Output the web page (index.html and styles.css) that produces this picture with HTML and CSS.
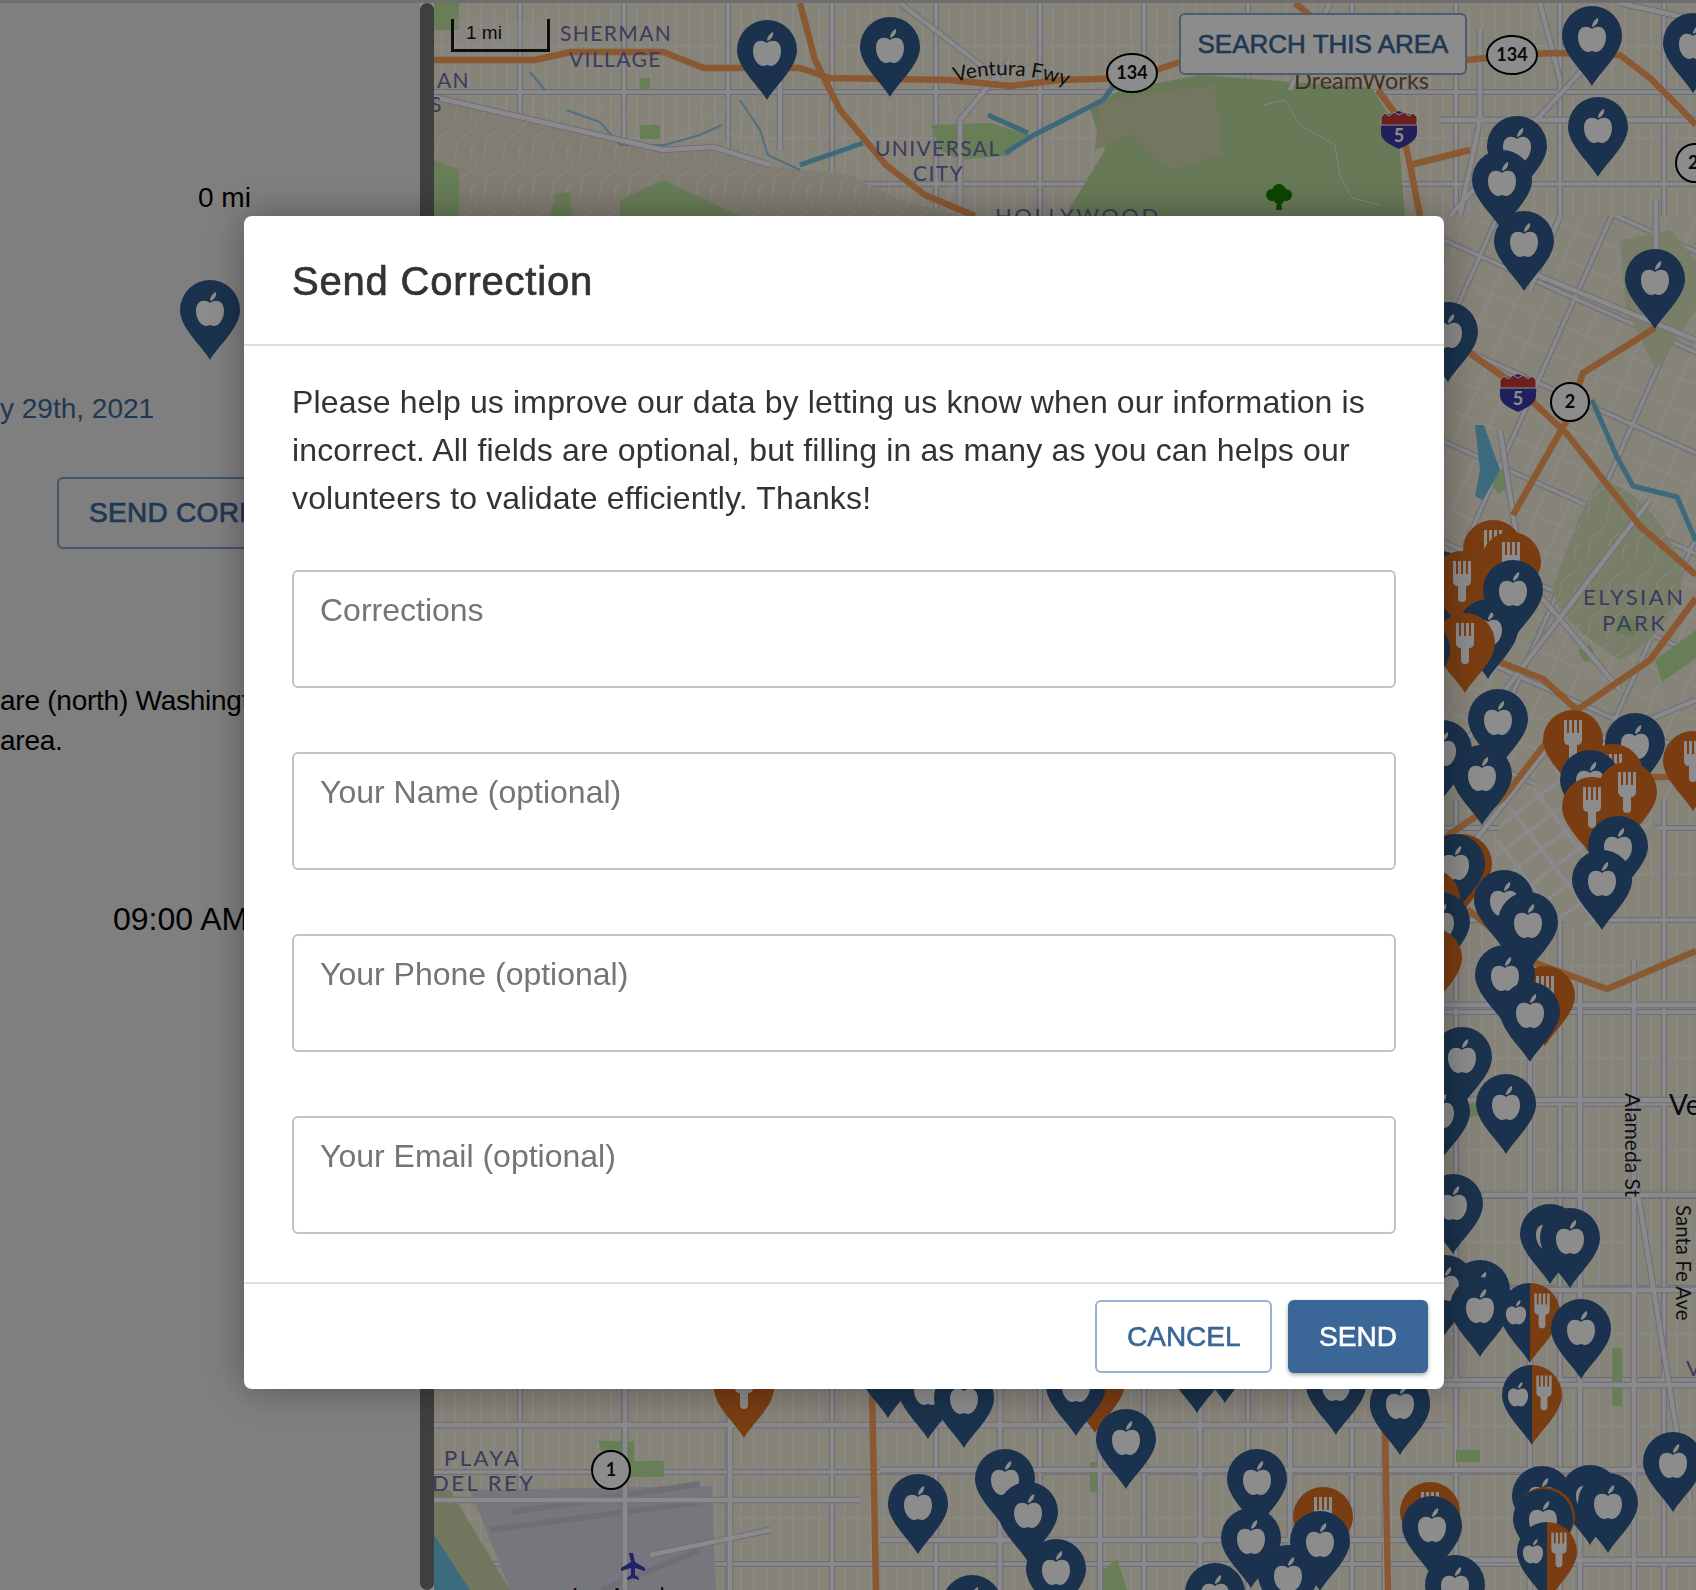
FILE: index.html
```html
<!DOCTYPE html>
<html lang="en">
<head>
<meta charset="utf-8">
<title>Send Correction</title>
<link rel="stylesheet" href="styles.css">
</head>
<body>
<div class="page">
  <aside class="panel">
    <div class="distance">0 mi</div>
    <svg class="panel-pin" width="60" height="80" viewBox="-30 -80 60 80" aria-hidden="true">
      <path class="navy" d="M0 0C-8-14-30-32-30-50A30 30 0 0 1 30-50C30-32 8-14 0 0Z"/>
      <path class="white" d="M0-57C-5-61-14-60-14-49C-14-40-8-34-4-34C-2-34-1-35 0-35C1-35 2-34 4-34C8-34 14-40 14-49C14-60 5-61 0-57ZM0-59C0-63 3-67 6-68C7-64 4-60 0-59Z"/>
    </svg>
    <div class="date">y 29th, 2021</div>
    <div class="panel-button">SEND CORRECTION</div>
    <p class="note">are (north) Washington<br>area.</p>
    <div class="hours">09:00 AM</div>
  </aside>
  <div class="scrollbar"></div>
  <main class="map">
    <svg class="map-art" viewBox="434 3 1262 1587" width="1262" height="1587">
      <defs>
        <pattern id="blocks" width="104" height="92" patternUnits="userSpaceOnUse">
          <path class="minor" d="M13 0V92M26 0V92M39 0V92M52 0V92M65 0V92M78 0V92M91 0V92M0 46H104"/>
          <path class="casing" d="M0 0H104M0 0V92M0 92H104M104 0V92"/>
          <path class="road" d="M0 0H104M0 0V92M0 92H104M104 0V92"/>
        </pattern>
        <pattern id="diag" width="104" height="92" patternUnits="userSpaceOnUse" patternTransform="rotate(24)">
          <path class="minor" d="M26 0V92M52 0V92M78 0V92M0 30H104M0 60H104"/>
          <path class="casing" d="M0 0H104M0 0V92M0 92H104M104 0V92"/>
          <path class="road" d="M0 0H104M0 0V92M0 92H104M104 0V92"/>
        </pattern>
        <pattern id="downtown" width="30" height="22" patternUnits="userSpaceOnUse" patternTransform="rotate(-37)">
          <path class="road" d="M0 0H30M0 0V22M0 22H30M30 0V22"/>
        </pattern>
        <pattern id="contour" width="48" height="40" patternUnits="userSpaceOnUse">
          <path class="contour" d="M2 38C8 28 2 20 12 14S18 6 26 2M22 38C28 28 22 22 32 16S42 8 46 2M38 38C42 32 36 28 44 24"/>
        </pattern>
        <path id="drop" d="M0 0C-8-14-30-32-30-50A30 30 0 0 1 30-50C30-32 8-14 0 0Z"/>
        <path id="apple" d="M0-57C-5-61-14-60-14-49C-14-40-8-34-4-34C-2-34-1-35 0-35C1-35 2-34 4-34C8-34 14-40 14-49C14-60 5-61 0-57ZM0-59C0-63 3-67 6-68C7-64 4-60 0-59Z"/>
        <path id="fork" d="M-9-70h3v13h2v-13h3v13h2v-13h3v13h2v-13h3V-50C9-47 7-45 4-45V-33A4 4 0 0 1-4-33V-45C-7-45-9-47-9-50Z"/>
        <g id="pa"><use href="#drop" class="navy"/><use href="#apple" class="white"/></g>
        <g id="pf"><use href="#drop" class="rust"/><use href="#fork" class="white"/></g>
        <g id="ph">
          <path class="navy" d="M0 0C-8-14-30-32-30-50A30 30 0 0 1 0-80Z"/>
          <path class="rust" d="M0 0C8-14 30-32 30-50A30 30 0 0 0 0-80Z"/>
          <use href="#apple" class="white" transform="translate(-14 -14) scale(.72)"/>
          <use href="#fork" class="white" transform="translate(12 -10) scale(.85)"/>
        </g>
        <g id="i5">
          <path class="shield-blue" d="M-18-12C-12-15-6-15 0-18C6-15 12-15 18-12V4C18 12 8 16 0 20C-8 16-18 12-18 4Z"/>
          <path class="shield-red" d="M-18-12L-14-16L-10-13L-5-17L0-14L5-17L10-13L14-16L18-12V-4H-18Z"/>
          <text class="shield-num" y="13" text-anchor="middle">5</text>
        </g>
        <g id="roads">
          <path d="M434 97L663 150L714 147L770 165M780 75V150M900 3L1000 80M1010 60L960 120V216M1290 90L1330 3M1480 30V120L1460 216M1540 3L1560 80M1620 3L1696 20M1440 120H1696M1450 216L1540 116L1610 40M1530 290L1560 216M1656 200V320M1500 260L1696 340M1500 430L1520 560L1490 620M1444 770L1650 500M1444 880L1570 720M1696 700L1600 740M1510 560L1620 690"/>
          <path d="M1530 1590V930M1580 1590V980M1634 1590V960M1637 1188L1677 1433L1690 1500M1444 1005H1696M1444 1100H1696M1444 1195H1696M1444 1290H1696M1444 1385H1696M1444 1470H1696M1444 1560H1696"/>
          <path d="M434 1425H1444M434 1500H860M880 1540H1444M880 1470H1444M625 1389V1590M730 1389V1590M1000 1389V1590M1100 1389V1590M1200 1389V1590M1290 1389V1590M1385 1389V1590M650 1555L770 1530"/>
        </g>
      </defs>

      <rect class="land" x="434" y="3" width="1262" height="1587"/>
      <rect x="434" y="3" width="1262" height="1587" fill="url(#blocks)"/>

      <!-- terrain, parks -->
      <polygon class="hill" points="434,100 663,152 720,148 765,165 850,175 900,200 960,216 434,216"/>
      <rect x="434" y="100" width="530" height="116" fill="url(#contour)"/>
      <path class="park" d="M434 3h25v27h-25ZM640 78h10v12h-10ZM640 125h20v14h-20ZM434 160l25 10v46h-25ZM550 216l6-22 14-2 2 24ZM620 200l43-20 30 14 47 22h-120ZM931 125L990 123L1030 135L1010 155L960 160L940 150ZM1390 18l8-8 4 14-8 6Z"/>
      <polygon class="land" points="1444,216 1696,216 1696,800 1444,800"/>
      <rect x="1444" y="216" width="252" height="584" fill="url(#diag)"/>
      <polygon class="land" points="1500,820 1570,750 1660,830 1590,930 1490,900"/>
      <polygon points="1500,820 1570,750 1660,830 1590,930 1490,900" fill="url(#downtown)"/>
      <path class="hill-green" d="M1600 480C1640 490 1660 520 1680 560C1690 600 1660 640 1620 660C1590 640 1560 620 1552 590C1570 540 1580 510 1600 480Z"/>
      <rect x="1552" y="480" width="144" height="180" fill="url(#contour)"/>
      <path class="hill-green" d="M1620 240l50-10 26 30v50l-40 60-30-60Z"/>
      <path class="park" d="M1655 660l41-30v28l-34 24ZM1578 650l12-6 6 14-12 4ZM1620 615l20 8-6 14-18-4ZM1490 480l14-12 6 18-12 8ZM1612 1348h10v58h-10ZM1465 1105l24-4 0 14-24 2ZM1576 1330h10v-6h-10ZM1456 1450h24v12h-24Z"/>
      <path class="park" d="M598 1441h36v20h30v16h-52Z"/>
      <path class="park" d="M1090 1462h10v30h-10ZM1097 1575l20-16 10 31h-30Z"/>

      <!-- griffith park -->
      <polygon class="green" points="1065,216 1105,150 1090,110 1120,90 1200,75 1372,88 1398,130 1405,216"/>
      <polygon class="tan" points="1100,100 1215,85 1222,155 1170,170 1130,135 1095,150"/>
      <path class="trail" d="M1263 105L1285 100L1300 125L1335 145L1340 175L1352 198L1380 205"/>

      <!-- airport and coast -->
      <polygon class="airport" points="470,1490 712,1486 716,1590 510,1590"/>
      <path class="runway" d="M512 1512L700 1484M490 1530L700 1502M602 1590L700 1550"/>
      <polygon class="sand" points="434,1490 450,1490 510,1590 464,1590 434,1540"/>
      <polygon class="water" points="434,1535 470,1590 434,1590"/>

      <!-- water -->
      <path class="river" d="M800 165L863 143M1005 153L1034 135L1103 100L1114 85M988 115L1028 133"/>
      <path class="river-thin" d="M740 100L760 130L768 155L800 170M566 110L600 122L620 145L665 145L700 135L722 125M530 72L545 90"/>
      <path class="river" d="M1592 400L1617 457L1633 486L1677 497L1696 541"/>
      <polygon class="water" points="1475,425 1484,425 1500,470 1483,500 1475,496 1480,470"/>

      <!-- larger roads -->
      <use href="#roads" class="casing-wide"/>
      <use href="#roads" class="road-wide"/>

      <!-- freeways -->
      <path class="fwy" d="M434 60L535 60L571 52L663 52L704 68L800 68L830 78L950 80L1010 86L1060 80L1132 78L1180 62L1300 60L1468 60L1512 55L1555 53L1620 55L1650 78L1680 108L1696 125"/>
      <path class="fwy" d="M800 3L815 60L840 110L886 165L925 195L975 216M1295 3L1315 20M1378 90L1400 120L1410 165L1420 216M1410 165L1470 150"/>
      <path class="fwy" d="M1444 335L1515 385L1567 434L1640 526L1696 575M1655 328L1583 373L1567 420L1513 515M1696 598L1650 660L1577 710L1543 679L1500 662M1577 710L1545 744L1503 798L1444 838M1627 777H1696M1467 909L1533 962L1607 989L1696 951"/>
      <path class="fwy" d="M872 1389L876 1590M1385 1430L1388 1590"/>

      <!-- map labels -->
      <text class="place-tight" x="560" y="41">SHERMAN</text>
      <text class="place-tight" x="569" y="67">VILLAGE</text>
      <text class="place-tight" x="437" y="88">AN</text>
      <text class="place-tight" x="430" y="112">S</text>
      <text class="place-tight" x="875" y="156">UNIVERSAL</text>
      <text class="place-tight" x="913" y="181">CITY</text>
      <text class="place" x="995" y="224">HOLLYWOOD</text>
      <text class="place" x="1583" y="605">ELYSIAN</text>
      <text class="place" x="1602" y="631">PARK</text>
      <text class="place" x="444" y="1466">PLAYA</text>
      <text class="place" x="432" y="1491">DEL REY</text>
      <path id="ventura" class="none" d="M955 82Q1013 66 1073 88"/>
      <text class="street-label"><textPath href="#ventura">Ventura Fwy</textPath></text>
      <text class="dream" x="1294" y="89">DreamWorks</text>
      <text class="street-alameda" transform="translate(1625 1093) rotate(90)">Alameda St</text>
      <text class="street-label" transform="translate(1676 1205) rotate(90)">Santa Fe Ave</text>
      <text class="big-label" x="1669" y="1115">Ve</text>
      <text class="place" x="1686" y="1376">V</text>
      <text class="place-dark" x="572" y="1603">Los Angeles</text>

      <!-- shields -->
      <g class="shield"><ellipse cx="1132" cy="73" rx="25" ry="19"/><text x="1132" y="79" text-anchor="middle">134</text></g>
      <g class="shield"><ellipse cx="1512" cy="55" rx="25" ry="19"/><text x="1512" y="61" text-anchor="middle">134</text></g>
      <g class="shield"><ellipse cx="1570" cy="402" rx="19" ry="19"/><text x="1570" y="408" text-anchor="middle">2</text></g>
      <g class="shield"><ellipse cx="1695" cy="163" rx="19" ry="19"/><text x="1688" y="169">2</text></g>
      <g class="shield"><ellipse cx="611" cy="1470" rx="19" ry="19"/><text x="611" y="1476" text-anchor="middle">1</text></g>
      <use href="#i5" x="1399" y="129"/>
      <use href="#i5" x="1518" y="392"/>

      <!-- park tree and plane -->
      <g class="tree"><circle cx="1272" cy="195" r="6"/><circle cx="1286" cy="195" r="6"/><circle cx="1279" cy="191" r="7"/><circle cx="1279" cy="198" r="6"/><path d="M1277 200h4l1 10h-6Z"/></g>
      <path class="plane" d="M629 1553h4l2 9 10 6v3l-10-3v7l4 3v2l-6-2-6 2v-2l4-3v-7l-10 3v-3l10-6Z"/>

      <!-- pins -->
      <use href="#pa" x="767" y="100"/>
      <use href="#pa" x="890" y="97"/>
      <use href="#pa" x="1592" y="86"/>
      <use href="#pa" x="1693" y="93"/>
      <use href="#pa" x="1598" y="177"/>
      <use href="#pa" x="1517" y="196"/>
      <use href="#pa" x="1502" y="230"/>
      <use href="#pa" x="1524" y="291"/>
      <use href="#pa" x="1655" y="329"/>
      <use href="#pa" x="1448" y="382"/>
      <use href="#pa" x="1440" y="631"/>
      <use href="#pf" x="1493" y="600"/>
      <use href="#pf" x="1511" y="612"/>
      <use href="#pf" x="1462" y="631"/>
      <use href="#pa" x="1488" y="679"/>
      <use href="#pa" x="1513" y="640"/>
      <use href="#pf" x="1465" y="693"/>
      <use href="#pa" x="1420" y="700"/>
      <use href="#pa" x="1498" y="769"/>
      <use href="#pa" x="1442" y="800"/>
      <use href="#pa" x="1482" y="825"/>
      <use href="#pf" x="1693" y="811"/>
      <use href="#pa" x="1635" y="793"/>
      <use href="#pf" x="1573" y="790"/>
      <use href="#pf" x="1613" y="824"/>
      <use href="#pa" x="1590" y="830"/>
      <use href="#pf" x="1627" y="842"/>
      <use href="#pf" x="1592" y="857"/>
      <use href="#pa" x="1618" y="896"/>
      <use href="#pa" x="1602" y="930"/>
      <use href="#pf" x="1462" y="914"/>
      <use href="#pa" x="1455" y="914"/>
      <use href="#pf" x="1430" y="949"/>
      <use href="#pa" x="1440" y="972"/>
      <use href="#pf" x="1432" y="1008"/>
      <use href="#pa" x="1504" y="950"/>
      <use href="#pa" x="1528" y="972"/>
      <use href="#pf" x="1545" y="1046"/>
      <use href="#pa" x="1505" y="1025"/>
      <use href="#pa" x="1530" y="1062"/>
      <use href="#pa" x="1462" y="1107"/>
      <use href="#pa" x="1506" y="1154"/>
      <use href="#pa" x="1440" y="1162"/>
      <use href="#pa" x="1453" y="1254"/>
      <use href="#pa" x="1550" y="1284"/>
      <use href="#pa" x="1570" y="1288"/>
      <use href="#pa" x="1480" y="1340"/>
      <use href="#pa" x="1445" y="1335"/>
      <use href="#pa" x="1480" y="1357"/>
      <use href="#ph" x="1530" y="1363"/>
      <use href="#pa" x="1581" y="1379"/>
      <use href="#ph" x="1532" y="1445"/>
      <use href="#pa" x="1673" y="1512"/>
      <use href="#pa" x="1542" y="1546"/>
      <use href="#pa" x="1590" y="1545"/>
      <use href="#pa" x="1608" y="1553"/>
      <use href="#pf" x="1545" y="1567"/>
      <use href="#pa" x="1543" y="1569"/>
      <use href="#ph" x="1547" y="1602"/>
      <use href="#pf" x="1430" y="1562"/>
      <use href="#pa" x="1432" y="1576"/>
      <use href="#pa" x="1455" y="1635"/>
      <use href="#pa" x="1400" y="1455"/>
      <use href="#pf" x="744" y="1438"/>
      <use href="#pa" x="888" y="1418"/>
      <use href="#pa" x="928" y="1439"/>
      <use href="#pa" x="964" y="1448"/>
      <use href="#pf" x="1095" y="1433"/>
      <use href="#pa" x="1076" y="1436"/>
      <use href="#pa" x="1126" y="1489"/>
      <use href="#pa" x="1197" y="1413"/>
      <use href="#pa" x="1225" y="1403"/>
      <use href="#pa" x="1336" y="1435"/>
      <use href="#pa" x="1400" y="1453"/>
      <use href="#pa" x="918" y="1554"/>
      <use href="#pa" x="1005" y="1529"/>
      <use href="#pa" x="1028" y="1562"/>
      <use href="#pa" x="1056" y="1619"/>
      <use href="#pa" x="972" y="1655"/>
      <use href="#pf" x="1323" y="1567"/>
      <use href="#pa" x="1257" y="1529"/>
      <use href="#pa" x="1251" y="1588"/>
      <use href="#pa" x="1288" y="1625"/>
      <use href="#pa" x="1320" y="1591"/>
      <use href="#pa" x="1215" y="1643"/>
    </svg>
    <div class="scale">1 mi</div>
    <div class="search-area">SEARCH THIS AREA</div>
  </main>
</div>

<div class="backdrop">
  <section class="modal">
    <header class="modal-head"><h2 class="modal-title">Send Correction</h2></header>
    <div class="modal-body">
      <p class="intro">Please help us improve our data by letting us know when our information is incorrect. All fields are optional, but filling in as many as you can helps our volunteers to validate efficiently. Thanks!</p>
      <form class="fields">
        <textarea class="field" placeholder="Corrections"></textarea>
        <textarea class="field" placeholder="Your Name (optional)"></textarea>
        <textarea class="field" placeholder="Your Phone (optional)"></textarea>
        <textarea class="field" placeholder="Your Email (optional)"></textarea>
      </form>
    </div>
    <footer class="modal-foot">
      <button class="btn btn-outline" type="button">CANCEL</button>
      <button class="btn btn-solid" type="button">SEND</button>
    </footer>
  </section>
</div>
</body>
</html>
```
FILE: styles.css
```css
* { box-sizing: border-box; }
html, body { margin: 0; height: 100%; overflow: hidden; }
body { font-family: "Liberation Sans", Arial, sans-serif; color: #000; background: #fff; }

.page { display: flex; height: 1590px; border-top: 3px solid #c8c8c8; }

/* left panel */
.panel { width: 420px; flex: none; display: flex; flex-direction: column; align-items: flex-start; overflow: hidden; background: #e8e8e8; font-size: 28px; line-height: 40px; }
.distance { margin: 175px 0 0 198px; }
.panel-pin { margin: 62px 0 0 180px; display: block; }
.date { margin-top: 29px; color: #3a6698; }
.panel-button { margin: 48px 0 0 57px; padding: 0 30px; height: 72px; line-height: 68px; border: 2px solid #7d9cc0; border-radius: 6px; color: #3a6698; white-space: nowrap; letter-spacing: .3px; -webkit-text-stroke: .7px #3a6698; }
.note { margin: 132px 0 0; letter-spacing: -.25px; }
.hours { margin: 138px 0 0 113px; font-size: 32px; white-space: nowrap; }

.scrollbar { width: 14px; flex: none; background: #737373; border-radius: 7px; }

/* map */
.map { position: relative; flex: 1; overflow: hidden; background: #f5eedc; }
.map-art { display: block; }
.map-art text { font-family: Lato, "Liberation Sans", sans-serif; }
.land { fill: #f5eedc; }
.hill { fill: #ebe3d0; }
.hill-green { fill: #dde5c0; }
.green { fill: #bcdc9f; }
.tan { fill: #d3d8ae; }
.park { fill: #bde59e; }
.trail { fill: none; stroke: #eef2e4; stroke-width: 1; }
.minor { fill: none; stroke: #fff; stroke-width: 1.2; }
.casing { fill: none; stroke: #c8c8d8; stroke-width: 6; }
.road { fill: none; stroke: #fbfbff; stroke-width: 3.5; }
.casing-wide { fill: none; stroke: #c8c8d8; stroke-width: 6.5; }
.road-wide { fill: none; stroke: #fbfbff; stroke-width: 4.5; }
.contour { fill: none; stroke: #fdfbf5; stroke-width: 1; }
.airport { fill: #d8d8e4; }
.runway { fill: none; stroke: #c8c8d8; stroke-width: 6; }
.sand { fill: #d0d8ac; }
.water { fill: #70c4e6; }
.river { fill: none; stroke: #70c0e0; stroke-width: 5; }
.river-thin { fill: none; stroke: #90cee8; stroke-width: 2; }
.fwy { fill: none; stroke: #fca35c; stroke-width: 6.5; stroke-linejoin: round; }
.none { fill: none; }
.place { font-size: 22px; letter-spacing: 2.5px; fill: #6c6cac; }
.place-tight { font-size: 21px; letter-spacing: 1.4px; fill: #6c6cac; }
.place-dark { font-size: 22px; fill: #111; }
.street-label { font-size: 20.5px; fill: #1c1c1c; }
.street-alameda { font-size: 21px; fill: #1c1c1c; }
.big-label { font-size: 28px; fill: #111; }
.dream { font-size: 23.5px; fill: #7a5640; }
.shield ellipse { fill: #fff; stroke: #000; stroke-width: 2; }
.shield text { font-size: 18px; font-weight: 700; fill: #111; }
.shield-blue { fill: #3b3ba8; }
.shield-red { fill: #c53a3a; stroke: #fff; stroke-width: 1; }
.shield-num { font-size: 18px; font-weight: 700; fill: #fff; }
.tree { fill: #1a7d00; }
.plane { fill: #3d3dc0; }
.navy { fill: #305c8c; }
.rust { fill: #de6f20; }
.white { fill: #fff; }

.scale { position: absolute; left: 17px; top: 16px; width: 99px; height: 33px; padding: 0 0 0 12px; border: 3px solid #1b1b1b; border-top: 0; background: rgba(255,255,255,.25); font-size: 19px; line-height: 28px; color: #111; }
.search-area { position: absolute; left: 745px; top: 10px; width: 288px; height: 62px; border: 2px solid #8fa9c8; border-radius: 6px; background: #fff; color: #3a6698; font-size: 26px; line-height: 58px; text-align: center; -webkit-text-stroke: .6px #3a6698; }

/* modal */
.backdrop { position: fixed; inset: 0; padding: 216px 8px 0 0; display: flex; justify-content: center; align-items: flex-start; background: rgba(0,0,0,.45); }
.modal { width: 1200px; height: 1173px; display: flex; flex-direction: column; background: #fff; border-radius: 8px; box-shadow: 0 0 40px rgba(0,0,0,.35); color: #333; }
.modal-head { height: 130px; padding: 2px 48px 0; flex: none; display: flex; align-items: center; border-bottom: 2px solid #e0e0e0; }
.modal-title { margin: 0; font-size: 40px; line-height: 48px; font-weight: 400; letter-spacing: .8px; -webkit-text-stroke: .7px #333; color: #333; }
.modal-body { flex: 1; padding: 32px 48px 48px; }
.intro { margin: 0 0 48px; font-size: 32px; line-height: 48px; letter-spacing: .15px; }
.fields { display: flex; flex-direction: column; gap: 64px; }
.field { display: block; width: 100%; height: 118px; padding: 18px 26px; border: 2px solid #c4c4c4; border-radius: 6px; font: 32px/40px "Liberation Sans", Arial, sans-serif; color: #333; resize: none; outline: none; overflow: hidden; background: #fff; }
.field::placeholder { color: #757575; opacity: 1; }
.modal-foot { flex: none; height: 107px; padding: 16px; display: flex; justify-content: flex-end; gap: 16px; border-top: 2px solid #e0e0e0; }
.btn { height: 73px; padding: 0 30px; border-radius: 6px; font: 28px/1 "Liberation Sans", Arial, sans-serif; cursor: pointer; }
.btn-outline { width: 177px; border: 2px solid #97b2d2; background: #fff; color: #3a6698; -webkit-text-stroke: .6px #3a6698; }
.btn-solid { width: 140px; border: 0; background: #3a6698; color: #fff; -webkit-text-stroke: .6px #fff; box-shadow: 0 2px 4px rgba(0,0,0,.35); }
```
